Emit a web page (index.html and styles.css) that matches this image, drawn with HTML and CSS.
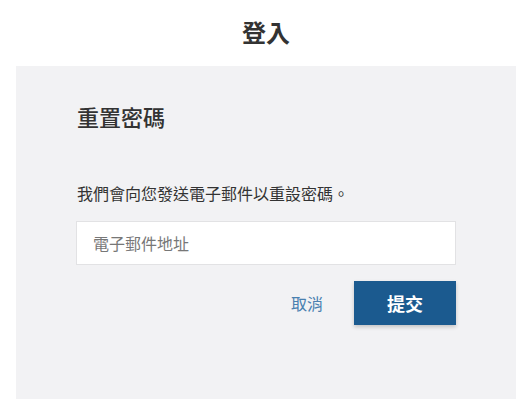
FILE: index.html
```html
<!DOCTYPE html>
<html lang="zh-Hant">
<head>
<meta charset="utf-8">
<title>登入</title>
<link rel="stylesheet" href="styles.css">
</head>
<body>
<div class="page">
  <h1 class="page-title">登入</h1>
  <div class="card">
    <h2 class="card-title">重置密碼</h2>
    <p class="desc">我們會向您發送電子郵件以重設密碼。</p>
    <input class="field" type="email" placeholder="電子郵件地址">
    <div class="actions">
      <a class="cancel" href="#">取消</a>
      <button class="submit" type="button">提交</button>
    </div>
  </div>
</div>
</body>
</html>
```

FILE: styles.css
```css
* { box-sizing: border-box; }
html, body { margin: 0; padding: 0; background: #fff; }
body {
  font-family: "Noto Sans CJK TC", "Noto Sans", sans-serif;
  color: #333;
}
.page {
  width: 500px;
  margin-left: 16px;
  display: flex;
  flex-direction: column;
}
.page-title {
  margin: 0;
  height: 66px;
  padding-top: 14px;
  text-align: center;
  font-size: 24px;
  line-height: 36px;
  font-weight: 700;
  color: #333;
}
.card {
  background: #f2f2f4;
  height: 333px;
  padding: 34px 60px 0 60px;
  display: flex;
  flex-direction: column;
}
.card-title {
  margin: 0 0 0 1px;
  font-size: 22px;
  line-height: 32px;
  font-weight: 500;
  color: #333;
}
.desc {
  margin: 49px 0 0 1px;
  font-size: 16px;
  line-height: 24px;
  color: #333;
}
.field {
  margin-top: 16px;
  width: 380px;
  height: 44px;
  border: 1px solid #e2e2e4;
  background: #fff;
  padding: 0 16px;
  font-family: inherit;
  font-size: 16px;
  color: #333;
  outline: none;
}
.field::placeholder { color: #777; }
.actions {
  margin-top: 16px;
  width: 380px;
  display: flex;
  justify-content: flex-end;
  align-items: center;
  gap: 31px;
}
.cancel {
  font-size: 16px;
  color: #4a80b0;
  text-decoration: none;
}
.submit {
  width: 102px;
  height: 44px;
  border: none;
  background: #1b5a8f;
  color: #fff;
  font-family: inherit;
  font-size: 18px;
  font-weight: 700;
  box-shadow: 0 2px 4px rgba(0,0,0,0.2);
  cursor: pointer;
}
```
